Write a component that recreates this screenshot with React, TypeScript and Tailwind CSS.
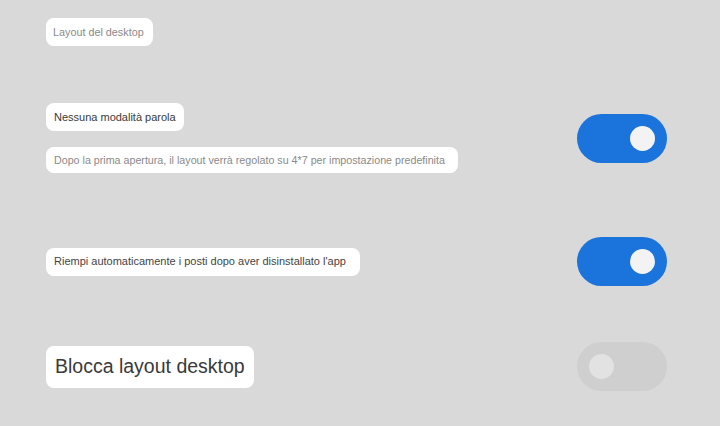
import React from 'react'

const font = { fontFamily: '"Liberation Sans", Arial, sans-serif' }

function Toggle({ on }: { on: boolean }) {
  return (
    <div
      className={`flex h-[49px] w-[90px] shrink-0 items-center rounded-full px-[12px] ${
        on ? 'justify-end bg-[#1a74dc]' : 'justify-start bg-[#cfcfcf]'
      }`}
    >
      <div className={`h-[25px] w-[25px] rounded-full ${on ? 'bg-[#f3f3f3]' : 'bg-[#e2e2e2]'}`} />
    </div>
  )
}

export default function App() {
  return (
    <div className="h-[426px] w-[720px] overflow-hidden bg-[#d9d9d9] pl-[46px] pr-[53px]" style={font}>
      {/* titolo sezione */}
      <div className="pt-[18px]">
        <div className="inline-flex h-[28px] items-center rounded-lg bg-white pl-[7px] pr-[9px] text-[10.8px] text-[#8a8a8a]">
          Layout del desktop
        </div>
      </div>

      {/* modalità parola */}
      <div className="mt-[57px] flex items-center justify-between">
        <div className="flex flex-col items-start gap-[16px]">
          <div className="inline-flex h-[28px] items-center rounded-lg bg-white px-[8px] text-[11px] text-[#3a3a3a]">
            Nessuna modalità parola
          </div>
          <div className="inline-flex h-[26px] items-center rounded-lg bg-white pl-[8px] pr-[13px] text-[10.7px] text-[#8a8a8a]">
            Dopo la prima apertura, il layout verrà regolato su 4*7 per impostazione predefinita
          </div>
        </div>
        <Toggle on />
      </div>

      {/* riempimento automatico */}
      <div className="mt-[64px] flex items-center justify-between">
        <div className="inline-flex h-[28px] items-center rounded-lg bg-white pl-[8px] pr-[14px] text-[11px] text-[#444]">
          Riempi automaticamente i posti dopo aver disinstallato l'app
        </div>
        <Toggle on />
      </div>

      {/* blocca layout */}
      <div className="mt-[56px] flex items-center justify-between">
        <div className="inline-flex h-[42px] items-center rounded-lg bg-white px-[9px] text-[19.5px] text-[#3a3a3a]">
          Blocca layout desktop
        </div>
        <Toggle on={false} />
      </div>
    </div>
  )
}
